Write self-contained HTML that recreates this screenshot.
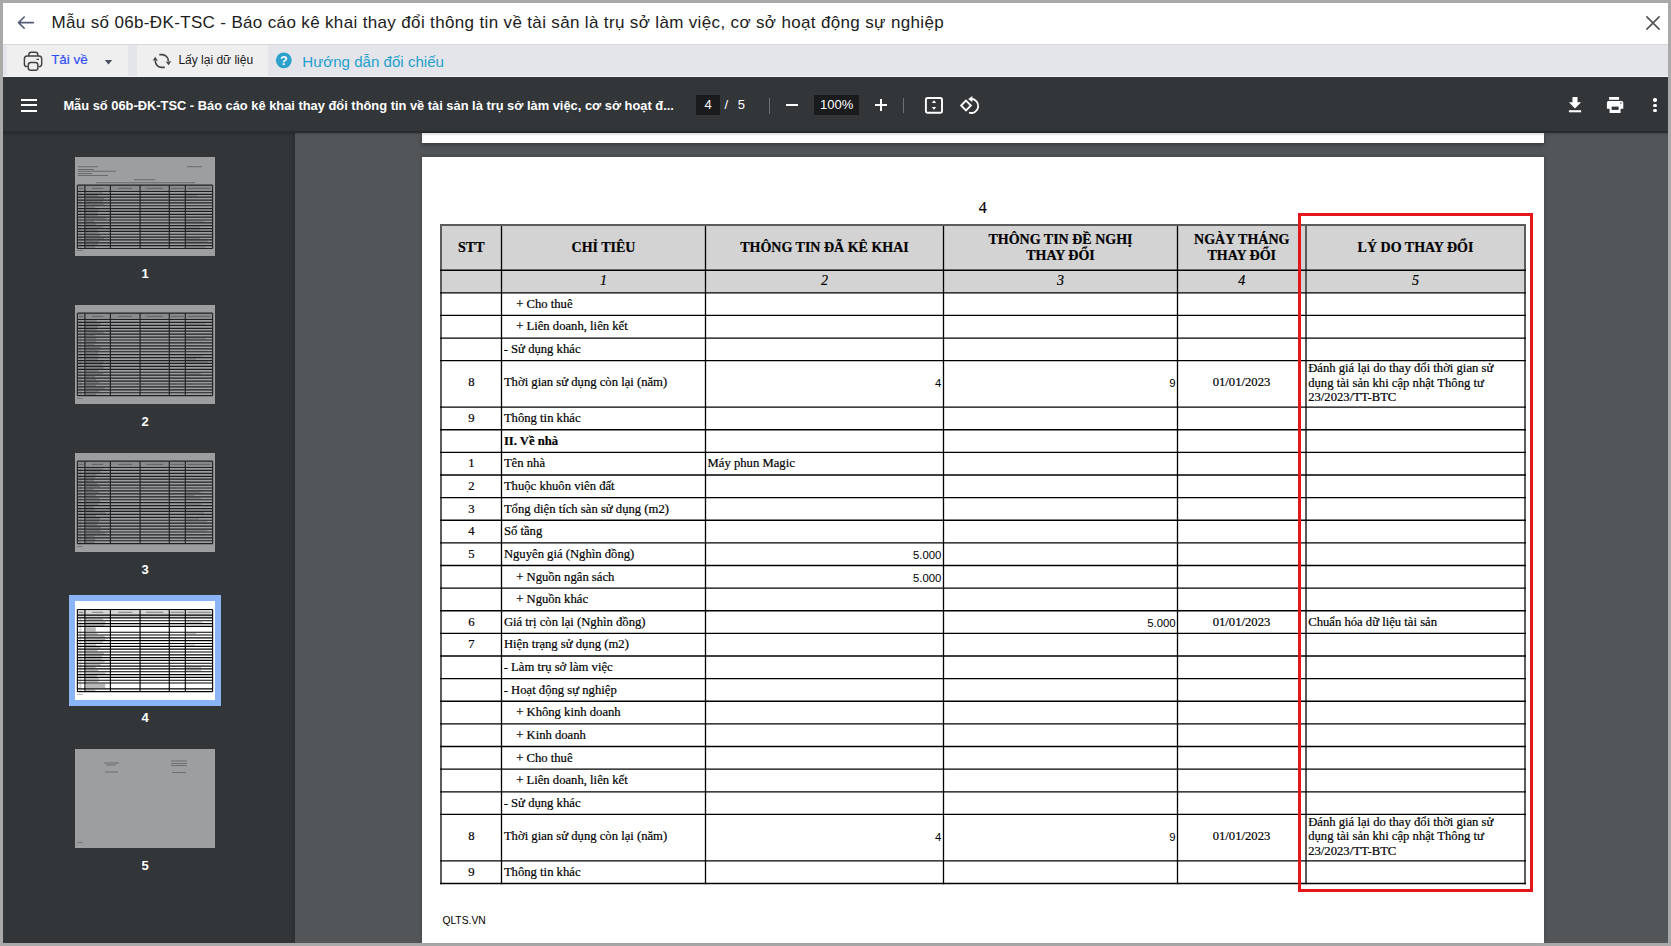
<!DOCTYPE html><html><head><meta charset="utf-8"><title>Mẫu số 06b-ĐK-TSC</title><style>html,body{margin:0;padding:0;width:1671px;height:946px;overflow:hidden;position:relative;}body{font-family:"Liberation Sans",sans-serif;-webkit-font-smoothing:antialiased}</style></head><body><div style="position:absolute;left:0;top:0;width:1671px;height:946px;background:#a9a9a9"></div>
<div style="position:absolute;left:3px;top:3px;width:1665px;height:41px;background:#ffffff"></div>
<div style="position:absolute;left:3px;top:44px;width:1665px;height:1px;background:#d9d9d9"></div>
<div style="position:absolute;left:3px;top:45px;width:1665px;height:31px;background:#e3e5ea"></div>
<div style="position:absolute;left:7px;top:45px;width:121px;height:31px;background:#efefef"></div>
<div style="position:absolute;left:137px;top:45px;width:131px;height:31px;background:#efefef"></div>
<div style="position:absolute;left:3px;top:76px;width:1665px;height:1px;background:#f4f4f4"></div>
<svg style="position:absolute;left:16px;top:14px" width="20" height="18" viewBox="0 0 20 18"><path d="M2.5 8.6 H17.5 M8.2 3 L2.5 8.6 L8.2 14.2" fill="none" stroke="#535b78" stroke-width="1.6" stroke-linecap="round" stroke-linejoin="round"/></svg>
<div style="position:absolute;left:51.50px;top:12.08px;font-family:'Liberation Sans', sans-serif;font-size:17px;line-height:21.25px;font-weight:400;color:#202020;white-space:nowrap;letter-spacing:0.35px;">Mẫu số 06b-ĐK-TSC - Báo cáo kê khai thay đổi thông tin về tài sản là trụ sở làm việc, cơ sở hoạt động sự nghiệp</div>
<svg style="position:absolute;left:1644px;top:14px" width="18" height="18" viewBox="0 0 18 18"><path d="M2.9 2.9 L15.1 15.1 M15.1 2.9 L2.9 15.1" fill="none" stroke="#555" stroke-width="1.7" stroke-linecap="round"/></svg>
<svg style="position:absolute;left:22px;top:50px" width="22" height="23" viewBox="0 0 22 23"><path d="M6.8 6 V4.6 Q6.8 2.3 9.2 2.3 H13.4 Q15.8 2.3 15.8 4.6 V6" fill="none" stroke="#424242" stroke-width="1.45"/><path d="M5.8 16.6 H5 Q2.4 16.6 2.4 13.9 V8.8 Q2.4 6 5.2 6 H16.9 Q19.7 6 19.7 8.8 V13.9 Q19.7 16.6 17 16.6 H16.4" fill="none" stroke="#424242" stroke-width="1.45"/><rect x="6.3" y="12.4" width="9.6" height="7.9" rx="2.6" fill="none" stroke="#424242" stroke-width="1.45"/><path d="M14.4 9.4 H17" stroke="#424242" stroke-width="1.2"/></svg>
<div style="position:absolute;left:51.20px;top:52.38px;font-family:'Liberation Sans', sans-serif;font-size:13.4px;line-height:16.75px;font-weight:400;color:#334ff6;white-space:nowrap;-webkit-text-stroke:0.2px #334ff6;">Tải về</div>
<svg style="position:absolute;left:104px;top:58.5px" width="9" height="7" viewBox="0 0 9 7"><path d="M0.8 1 H8.2 L4.5 5.6 Z" fill="#4b5162"/></svg>
<svg style="position:absolute;left:150px;top:50px" width="24" height="22" viewBox="0 0 24 22"><path d="M9.3 4.6 H12 A6.4 6.4 0 0 1 18.4 11" fill="none" stroke="#444" stroke-width="1.6"/><path d="M15.8 11.8 L18.6 15.3 L21.2 11.2 Z" fill="#444"/><path d="M14.8 17.4 H12 A6.4 6.4 0 0 1 5.3 11" fill="none" stroke="#444" stroke-width="1.6"/><path d="M2.8 10.6 L5.2 6.8 L7.8 10.8 Z" fill="#444"/></svg>
<div style="position:absolute;left:178.40px;top:53.34px;font-family:'Liberation Sans', sans-serif;font-size:12px;line-height:15.0px;font-weight:400;color:#1a1a1a;white-space:nowrap;">Lấy lại dữ liệu</div>
<svg style="position:absolute;left:275px;top:52px" width="18" height="17" viewBox="0 0 18 17"><circle cx="8.8" cy="8.3" r="7.9" fill="#2ba1cb"/><text x="8.8" y="12.9" text-anchor="middle" font-family="Liberation Sans" font-weight="700" font-size="12.5" fill="#fff">?</text></svg>
<div style="position:absolute;left:302.30px;top:52.63px;font-family:'Liberation Sans', sans-serif;font-size:15.1px;line-height:18.88px;font-weight:400;color:#23a0cb;white-space:nowrap;">Hướng dẫn đối chiếu</div>
<div style="position:absolute;left:3px;top:77px;width:1665px;height:56px;background:#323639"></div>
<div style="position:absolute;left:21px;top:99px;width:16px;height:2px;background:#fff"></div>
<div style="position:absolute;left:21px;top:104px;width:16px;height:2px;background:#fff"></div>
<div style="position:absolute;left:21px;top:109.5px;width:16px;height:2px;background:#fff"></div>
<div style="position:absolute;left:63.40px;top:97.59px;font-family:'Liberation Sans', sans-serif;font-size:12.87px;line-height:16.09px;font-weight:700;color:#ffffff;white-space:nowrap;">Mẫu số 06b-ĐK-TSC - Báo cáo kê khai thay đổi thông tin về tài sản là trụ sở làm việc, cơ sở hoạt đ...</div>
<div style="position:absolute;left:696px;top:95px;width:24px;height:20px;background:#191b1c"></div>
<div style="position:absolute;left:408.00px;top:97.37px;width:600px;text-align:center;font-family:'Liberation Sans', sans-serif;font-size:13px;line-height:16.25px;font-weight:400;color:#fff;white-space:nowrap;">4</div>
<div style="position:absolute;left:426.30px;top:97.37px;width:600px;text-align:center;font-family:'Liberation Sans', sans-serif;font-size:13px;line-height:16.25px;font-weight:400;color:#fff;white-space:nowrap;">/</div>
<div style="position:absolute;left:441.40px;top:97.37px;width:600px;text-align:center;font-family:'Liberation Sans', sans-serif;font-size:13px;line-height:16.25px;font-weight:400;color:#fff;white-space:nowrap;">5</div>
<div style="position:absolute;left:769px;top:97.5px;width:1px;height:16px;background:#6d7073"></div>
<div style="position:absolute;left:786px;top:104px;width:12px;height:2px;background:#fff"></div>
<div style="position:absolute;left:814px;top:95px;width:45px;height:20px;background:#191b1c"></div>
<div style="position:absolute;left:536.70px;top:97.37px;width:600px;text-align:center;font-family:'Liberation Sans', sans-serif;font-size:13px;line-height:16.25px;font-weight:400;color:#fff;white-space:nowrap;">100%</div>
<div style="position:absolute;left:875px;top:104px;width:12px;height:2px;background:#fff"></div>
<div style="position:absolute;left:880px;top:99px;width:2px;height:12px;background:#fff"></div>
<div style="position:absolute;left:903px;top:98px;width:1px;height:15px;background:#6d7073"></div>
<svg style="position:absolute;left:922px;top:95px" width="24" height="20" viewBox="0 0 24 20"><rect x="3.9" y="3" width="16.1" height="14.7" rx="1.8" fill="none" stroke="#fff" stroke-width="1.9"/><path d="M9.8 8 L12 5.2 L14.2 8 Z M9.8 12 L12 14.8 L14.2 12 Z" fill="#fff"/></svg>
<svg style="position:absolute;left:958px;top:94px" width="24" height="22" viewBox="0 0 24 22"><path d="M8 6.6 L12.9 11.5 L8 16.4 L3.1 11.5 Z" fill="none" stroke="#fff" stroke-width="1.8"/><path d="M12.6 5 A7 7 0 1 1 11 18.6" fill="none" stroke="#fff" stroke-width="1.8"/><path d="M14.4 2 L14.4 8.2 L10.2 5.1 Z" fill="#fff"/></svg>
<svg style="position:absolute;left:1566px;top:95px" width="18" height="20" viewBox="0 0 18 20"><path d="M6.5 2 H11.5 V7.3 H15.1 L9 13.4 L2.9 7.3 H6.5 Z" fill="#fff"/><rect x="2.9" y="15.2" width="12.2" height="2.1" fill="#fff"/></svg>
<svg style="position:absolute;left:1604px;top:95px" width="22" height="20" viewBox="0 0 22 20"><rect x="5.1" y="2" width="10" height="2.8" fill="#fff"/><path d="M4.6 6 H17.6 Q19.3 6 19.3 7.7 V13.7 H16.6 V17.9 H5.6 V13.7 H2.9 V7.7 Q2.9 6 4.6 6 Z" fill="#fff"/><rect x="7.6" y="11.6" width="7" height="3.3" fill="#323639"/><circle cx="16.9" cy="8" r="0.7" fill="#323639"/></svg>
<div style="position:absolute;left:1653.4px;top:98.4px;width:3.3px;height:3.3px;border-radius:50%;background:#fff"></div>
<div style="position:absolute;left:1653.4px;top:103.7px;width:3.3px;height:3.3px;border-radius:50%;background:#fff"></div>
<div style="position:absolute;left:1653.4px;top:108.7px;width:3.3px;height:3.3px;border-radius:50%;background:#fff"></div>
<div style="position:absolute;left:3px;top:133px;width:292px;height:810px;background:#323639"></div>
<div style="position:absolute;left:290px;top:133px;width:5px;height:810px;background:linear-gradient(to right, rgba(0,0,0,0), rgba(0,0,0,0.12))"></div>
<div style="position:absolute;left:295px;top:133px;width:1373px;height:810px;background:#525659"></div>
<div style="position:absolute;left:422px;top:133px;width:1122px;height:10px;background:#fff;box-shadow:0 2px 5px rgba(0,0,0,0.35)"></div>
<div style="position:absolute;left:422px;top:157px;width:1122px;height:786px;background:#fff;box-shadow:0 -1px 4px rgba(0,0,0,0.2)"></div>
<div style="position:absolute;left:3px;top:131px;width:1665px;height:5px;background:linear-gradient(to bottom, rgba(0,0,0,0.25), rgba(0,0,0,0))"></div>
<div style="position:absolute;left:441px;top:225px;width:1084px;height:67.8px;background:#d3d3d3"></div>
<svg style="position:absolute;left:0;top:0" width="1671" height="946" viewBox="0 0 1671 946"><line x1="441" y1="224" x2="441" y2="884.16" stroke="#5c5c5c" stroke-width="2"/><line x1="501.5" y1="224" x2="501.5" y2="884.16" stroke="#000" stroke-width="1.3"/><line x1="705.5" y1="224" x2="705.5" y2="884.16" stroke="#000" stroke-width="1.3"/><line x1="943.5" y1="224" x2="943.5" y2="884.16" stroke="#000" stroke-width="1.3"/><line x1="1177.5" y1="224" x2="1177.5" y2="884.16" stroke="#000" stroke-width="1.3"/><line x1="1306" y1="224" x2="1306" y2="884.16" stroke="#5c5c5c" stroke-width="2"/><line x1="1525" y1="224" x2="1525" y2="884.16" stroke="#5c5c5c" stroke-width="2"/><line x1="440" y1="225.00" x2="1526" y2="225.00" stroke="#5c5c5c" stroke-width="2"/><line x1="440" y1="270.25" x2="1526" y2="270.25" stroke="#000" stroke-width="1.35"/><line x1="440" y1="292.80" x2="1526" y2="292.80" stroke="#000" stroke-width="1.35"/><line x1="440" y1="315.43" x2="1526" y2="315.43" stroke="#000" stroke-width="1.35"/><line x1="440" y1="338.06" x2="1526" y2="338.06" stroke="#000" stroke-width="1.35"/><line x1="440" y1="360.69" x2="1526" y2="360.69" stroke="#000" stroke-width="1.35"/><line x1="440" y1="407.09" x2="1526" y2="407.09" stroke="#000" stroke-width="1.35"/><line x1="440" y1="429.72" x2="1526" y2="429.72" stroke="#000" stroke-width="1.35"/><line x1="440" y1="452.35" x2="1526" y2="452.35" stroke="#000" stroke-width="1.35"/><line x1="440" y1="474.98" x2="1526" y2="474.98" stroke="#000" stroke-width="1.35"/><line x1="440" y1="497.61" x2="1526" y2="497.61" stroke="#000" stroke-width="1.35"/><line x1="440" y1="520.24" x2="1526" y2="520.24" stroke="#000" stroke-width="1.35"/><line x1="440" y1="542.87" x2="1526" y2="542.87" stroke="#000" stroke-width="1.35"/><line x1="440" y1="565.50" x2="1526" y2="565.50" stroke="#000" stroke-width="1.35"/><line x1="440" y1="588.13" x2="1526" y2="588.13" stroke="#000" stroke-width="1.35"/><line x1="440" y1="610.76" x2="1526" y2="610.76" stroke="#000" stroke-width="1.35"/><line x1="440" y1="633.39" x2="1526" y2="633.39" stroke="#000" stroke-width="1.35"/><line x1="440" y1="656.02" x2="1526" y2="656.02" stroke="#000" stroke-width="1.35"/><line x1="440" y1="678.65" x2="1526" y2="678.65" stroke="#000" stroke-width="1.35"/><line x1="440" y1="701.28" x2="1526" y2="701.28" stroke="#000" stroke-width="1.35"/><line x1="440" y1="723.91" x2="1526" y2="723.91" stroke="#000" stroke-width="1.35"/><line x1="440" y1="746.54" x2="1526" y2="746.54" stroke="#000" stroke-width="1.35"/><line x1="440" y1="769.17" x2="1526" y2="769.17" stroke="#000" stroke-width="1.35"/><line x1="440" y1="791.80" x2="1526" y2="791.80" stroke="#000" stroke-width="1.35"/><line x1="440" y1="814.43" x2="1526" y2="814.43" stroke="#000" stroke-width="1.35"/><line x1="440" y1="860.83" x2="1526" y2="860.83" stroke="#000" stroke-width="1.35"/><line x1="440" y1="883.46" x2="1526" y2="883.46" stroke="#000" stroke-width="1.35"/></svg>
<div style="position:absolute;left:682.70px;top:198.40px;width:600px;text-align:center;font-family:'Liberation Serif', serif;font-size:16px;line-height:20.0px;font-weight:400;color:#000;white-space:nowrap;-webkit-text-stroke:0.2px #000;">4</div>
<div style="position:absolute;left:171.25px;top:238.73px;width:600px;text-align:center;font-family:'Liberation Serif', serif;font-size:14px;line-height:17.5px;font-weight:700;color:#000;white-space:nowrap;-webkit-text-stroke:0.2px #000;">STT</div>
<div style="position:absolute;left:303.50px;top:238.73px;width:600px;text-align:center;font-family:'Liberation Serif', serif;font-size:14px;line-height:17.5px;font-weight:700;color:#000;white-space:nowrap;-webkit-text-stroke:0.2px #000;">CHỈ TIÊU</div>
<div style="position:absolute;left:524.50px;top:238.73px;width:600px;text-align:center;font-family:'Liberation Serif', serif;font-size:14px;line-height:17.5px;font-weight:700;color:#000;white-space:nowrap;-webkit-text-stroke:0.2px #000;">THÔNG TIN ĐÃ KÊ KHAI</div>
<div style="position:absolute;left:760.50px;top:231.13px;width:600px;text-align:center;font-family:'Liberation Serif', serif;font-size:14px;line-height:17.5px;font-weight:700;color:#000;white-space:nowrap;-webkit-text-stroke:0.2px #000;">THÔNG TIN ĐỀ NGHỊ</div>
<div style="position:absolute;left:760.50px;top:246.93px;width:600px;text-align:center;font-family:'Liberation Serif', serif;font-size:14px;line-height:17.5px;font-weight:700;color:#000;white-space:nowrap;-webkit-text-stroke:0.2px #000;">THAY ĐỔI</div>
<div style="position:absolute;left:941.75px;top:230.83px;width:600px;text-align:center;font-family:'Liberation Serif', serif;font-size:14px;line-height:17.5px;font-weight:700;color:#000;white-space:nowrap;-webkit-text-stroke:0.2px #000;">NGÀY THÁNG</div>
<div style="position:absolute;left:941.75px;top:246.63px;width:600px;text-align:center;font-family:'Liberation Serif', serif;font-size:14px;line-height:17.5px;font-weight:700;color:#000;white-space:nowrap;-webkit-text-stroke:0.2px #000;">THAY ĐỔI</div>
<div style="position:absolute;left:1115.50px;top:238.93px;width:600px;text-align:center;font-family:'Liberation Serif', serif;font-size:14px;line-height:17.5px;font-weight:700;color:#000;white-space:nowrap;-webkit-text-stroke:0.2px #000;">LÝ DO THAY ĐỔI</div>
<div style="position:absolute;left:303.50px;top:271.93px;width:600px;text-align:center;font-family:'Liberation Serif', serif;font-size:14px;line-height:17.5px;font-weight:400;color:#000;white-space:nowrap;font-style:italic;-webkit-text-stroke:0.2px #000;">1</div>
<div style="position:absolute;left:524.50px;top:271.93px;width:600px;text-align:center;font-family:'Liberation Serif', serif;font-size:14px;line-height:17.5px;font-weight:400;color:#000;white-space:nowrap;font-style:italic;-webkit-text-stroke:0.2px #000;">2</div>
<div style="position:absolute;left:760.50px;top:271.93px;width:600px;text-align:center;font-family:'Liberation Serif', serif;font-size:14px;line-height:17.5px;font-weight:400;color:#000;white-space:nowrap;font-style:italic;-webkit-text-stroke:0.2px #000;">3</div>
<div style="position:absolute;left:941.75px;top:271.93px;width:600px;text-align:center;font-family:'Liberation Serif', serif;font-size:14px;line-height:17.5px;font-weight:400;color:#000;white-space:nowrap;font-style:italic;-webkit-text-stroke:0.2px #000;">4</div>
<div style="position:absolute;left:1115.50px;top:271.93px;width:600px;text-align:center;font-family:'Liberation Serif', serif;font-size:14px;line-height:17.5px;font-weight:400;color:#000;white-space:nowrap;font-style:italic;-webkit-text-stroke:0.2px #000;">5</div>
<div style="position:absolute;left:516.20px;top:296.82px;font-family:'Liberation Serif', serif;font-size:12.67px;line-height:15.84px;font-weight:400;color:#000;white-space:nowrap;-webkit-text-stroke:0.2px #000;">+ Cho thuê</div>
<div style="position:absolute;left:516.20px;top:319.45px;font-family:'Liberation Serif', serif;font-size:12.67px;line-height:15.84px;font-weight:400;color:#000;white-space:nowrap;-webkit-text-stroke:0.2px #000;">+ Liên doanh, liên kết</div>
<div style="position:absolute;left:503.70px;top:342.08px;font-family:'Liberation Serif', serif;font-size:12.67px;line-height:15.84px;font-weight:400;color:#000;white-space:nowrap;-webkit-text-stroke:0.2px #000;">- Sử dụng khác</div>
<div style="position:absolute;left:171.30px;top:375.00px;width:600px;text-align:center;font-family:'Liberation Serif', serif;font-size:12.67px;line-height:15.84px;font-weight:400;color:#000;white-space:nowrap;-webkit-text-stroke:0.2px #000;">8</div>
<div style="position:absolute;left:503.90px;top:375.00px;font-family:'Liberation Serif', serif;font-size:12.67px;line-height:15.84px;font-weight:400;color:#000;white-space:nowrap;-webkit-text-stroke:0.2px #000;">Thời gian sử dụng còn lại (năm)</div>
<div style="position:absolute;left:341.30px;top:376.18px;width:600px;text-align:right;font-family:'Liberation Sans', sans-serif;font-size:11.33px;line-height:14.16px;font-weight:400;color:#000;white-space:nowrap;">4</div>
<div style="position:absolute;left:575.60px;top:376.18px;width:600px;text-align:right;font-family:'Liberation Sans', sans-serif;font-size:11.33px;line-height:14.16px;font-weight:400;color:#000;white-space:nowrap;">9</div>
<div style="position:absolute;left:941.50px;top:375.00px;width:600px;text-align:center;font-family:'Liberation Serif', serif;font-size:12.67px;line-height:15.84px;font-weight:400;color:#000;white-space:nowrap;-webkit-text-stroke:0.2px #000;">01/01/2023</div>
<div style="position:absolute;left:1308.20px;top:361.30px;font-family:'Liberation Serif', serif;font-size:12.67px;line-height:15.84px;font-weight:400;color:#000;white-space:nowrap;-webkit-text-stroke:0.2px #000;">Đánh giá lại do thay đổi thời gian sử</div>
<div style="position:absolute;left:1308.20px;top:375.60px;font-family:'Liberation Serif', serif;font-size:12.67px;line-height:15.84px;font-weight:400;color:#000;white-space:nowrap;-webkit-text-stroke:0.2px #000;">dụng tài sản khi cập nhật Thông tư</div>
<div style="position:absolute;left:1308.20px;top:389.90px;font-family:'Liberation Serif', serif;font-size:12.67px;line-height:15.84px;font-weight:400;color:#000;white-space:nowrap;-webkit-text-stroke:0.2px #000;">23/2023/TT-BTC</div>
<div style="position:absolute;left:171.30px;top:411.11px;width:600px;text-align:center;font-family:'Liberation Serif', serif;font-size:12.67px;line-height:15.84px;font-weight:400;color:#000;white-space:nowrap;-webkit-text-stroke:0.2px #000;">9</div>
<div style="position:absolute;left:503.90px;top:411.11px;font-family:'Liberation Serif', serif;font-size:12.67px;line-height:15.84px;font-weight:400;color:#000;white-space:nowrap;-webkit-text-stroke:0.2px #000;">Thông tin khác</div>
<div style="position:absolute;left:503.90px;top:433.74px;font-family:'Liberation Serif', serif;font-size:12.67px;line-height:15.84px;font-weight:700;color:#000;white-space:nowrap;-webkit-text-stroke:0.2px #000;">II. Về nhà</div>
<div style="position:absolute;left:171.30px;top:456.37px;width:600px;text-align:center;font-family:'Liberation Serif', serif;font-size:12.67px;line-height:15.84px;font-weight:400;color:#000;white-space:nowrap;-webkit-text-stroke:0.2px #000;">1</div>
<div style="position:absolute;left:503.90px;top:456.37px;font-family:'Liberation Serif', serif;font-size:12.67px;line-height:15.84px;font-weight:400;color:#000;white-space:nowrap;-webkit-text-stroke:0.2px #000;">Tên nhà</div>
<div style="position:absolute;left:707.60px;top:456.37px;font-family:'Liberation Serif', serif;font-size:12.67px;line-height:15.84px;font-weight:400;color:#000;white-space:nowrap;-webkit-text-stroke:0.2px #000;">Máy phun Magic</div>
<div style="position:absolute;left:171.30px;top:479.00px;width:600px;text-align:center;font-family:'Liberation Serif', serif;font-size:12.67px;line-height:15.84px;font-weight:400;color:#000;white-space:nowrap;-webkit-text-stroke:0.2px #000;">2</div>
<div style="position:absolute;left:503.90px;top:479.00px;font-family:'Liberation Serif', serif;font-size:12.67px;line-height:15.84px;font-weight:400;color:#000;white-space:nowrap;-webkit-text-stroke:0.2px #000;">Thuộc khuôn viên đất</div>
<div style="position:absolute;left:171.30px;top:501.63px;width:600px;text-align:center;font-family:'Liberation Serif', serif;font-size:12.67px;line-height:15.84px;font-weight:400;color:#000;white-space:nowrap;-webkit-text-stroke:0.2px #000;">3</div>
<div style="position:absolute;left:503.90px;top:501.63px;font-family:'Liberation Serif', serif;font-size:12.67px;line-height:15.84px;font-weight:400;color:#000;white-space:nowrap;-webkit-text-stroke:0.2px #000;">Tổng diện tích sàn sử dụng (m2)</div>
<div style="position:absolute;left:171.30px;top:524.26px;width:600px;text-align:center;font-family:'Liberation Serif', serif;font-size:12.67px;line-height:15.84px;font-weight:400;color:#000;white-space:nowrap;-webkit-text-stroke:0.2px #000;">4</div>
<div style="position:absolute;left:503.90px;top:524.26px;font-family:'Liberation Serif', serif;font-size:12.67px;line-height:15.84px;font-weight:400;color:#000;white-space:nowrap;-webkit-text-stroke:0.2px #000;">Số tầng</div>
<div style="position:absolute;left:171.30px;top:546.89px;width:600px;text-align:center;font-family:'Liberation Serif', serif;font-size:12.67px;line-height:15.84px;font-weight:400;color:#000;white-space:nowrap;-webkit-text-stroke:0.2px #000;">5</div>
<div style="position:absolute;left:503.90px;top:546.89px;font-family:'Liberation Serif', serif;font-size:12.67px;line-height:15.84px;font-weight:400;color:#000;white-space:nowrap;-webkit-text-stroke:0.2px #000;">Nguyên giá (Nghìn đồng)</div>
<div style="position:absolute;left:341.30px;top:548.08px;width:600px;text-align:right;font-family:'Liberation Sans', sans-serif;font-size:11.33px;line-height:14.16px;font-weight:400;color:#000;white-space:nowrap;">5.000</div>
<div style="position:absolute;left:516.20px;top:569.52px;font-family:'Liberation Serif', serif;font-size:12.67px;line-height:15.84px;font-weight:400;color:#000;white-space:nowrap;-webkit-text-stroke:0.2px #000;">+ Nguồn ngân sách</div>
<div style="position:absolute;left:341.30px;top:570.71px;width:600px;text-align:right;font-family:'Liberation Sans', sans-serif;font-size:11.33px;line-height:14.16px;font-weight:400;color:#000;white-space:nowrap;">5.000</div>
<div style="position:absolute;left:516.20px;top:592.15px;font-family:'Liberation Serif', serif;font-size:12.67px;line-height:15.84px;font-weight:400;color:#000;white-space:nowrap;-webkit-text-stroke:0.2px #000;">+ Nguồn khác</div>
<div style="position:absolute;left:171.30px;top:614.78px;width:600px;text-align:center;font-family:'Liberation Serif', serif;font-size:12.67px;line-height:15.84px;font-weight:400;color:#000;white-space:nowrap;-webkit-text-stroke:0.2px #000;">6</div>
<div style="position:absolute;left:503.90px;top:614.78px;font-family:'Liberation Serif', serif;font-size:12.67px;line-height:15.84px;font-weight:400;color:#000;white-space:nowrap;-webkit-text-stroke:0.2px #000;">Giá trị còn lại (Nghìn đồng)</div>
<div style="position:absolute;left:575.60px;top:615.97px;width:600px;text-align:right;font-family:'Liberation Sans', sans-serif;font-size:11.33px;line-height:14.16px;font-weight:400;color:#000;white-space:nowrap;">5.000</div>
<div style="position:absolute;left:941.50px;top:614.78px;width:600px;text-align:center;font-family:'Liberation Serif', serif;font-size:12.67px;line-height:15.84px;font-weight:400;color:#000;white-space:nowrap;-webkit-text-stroke:0.2px #000;">01/01/2023</div>
<div style="position:absolute;left:1308.20px;top:614.78px;font-family:'Liberation Serif', serif;font-size:12.67px;line-height:15.84px;font-weight:400;color:#000;white-space:nowrap;-webkit-text-stroke:0.2px #000;">Chuẩn hóa dữ liệu tài sản</div>
<div style="position:absolute;left:171.30px;top:637.41px;width:600px;text-align:center;font-family:'Liberation Serif', serif;font-size:12.67px;line-height:15.84px;font-weight:400;color:#000;white-space:nowrap;-webkit-text-stroke:0.2px #000;">7</div>
<div style="position:absolute;left:503.90px;top:637.41px;font-family:'Liberation Serif', serif;font-size:12.67px;line-height:15.84px;font-weight:400;color:#000;white-space:nowrap;-webkit-text-stroke:0.2px #000;">Hiện trạng sử dụng (m2)</div>
<div style="position:absolute;left:503.70px;top:660.04px;font-family:'Liberation Serif', serif;font-size:12.67px;line-height:15.84px;font-weight:400;color:#000;white-space:nowrap;-webkit-text-stroke:0.2px #000;">- Làm trụ sở làm việc</div>
<div style="position:absolute;left:503.70px;top:682.67px;font-family:'Liberation Serif', serif;font-size:12.67px;line-height:15.84px;font-weight:400;color:#000;white-space:nowrap;-webkit-text-stroke:0.2px #000;">- Hoạt động sự nghiệp</div>
<div style="position:absolute;left:516.20px;top:705.30px;font-family:'Liberation Serif', serif;font-size:12.67px;line-height:15.84px;font-weight:400;color:#000;white-space:nowrap;-webkit-text-stroke:0.2px #000;">+ Không kinh doanh</div>
<div style="position:absolute;left:516.20px;top:727.93px;font-family:'Liberation Serif', serif;font-size:12.67px;line-height:15.84px;font-weight:400;color:#000;white-space:nowrap;-webkit-text-stroke:0.2px #000;">+ Kinh doanh</div>
<div style="position:absolute;left:516.20px;top:750.56px;font-family:'Liberation Serif', serif;font-size:12.67px;line-height:15.84px;font-weight:400;color:#000;white-space:nowrap;-webkit-text-stroke:0.2px #000;">+ Cho thuê</div>
<div style="position:absolute;left:516.20px;top:773.19px;font-family:'Liberation Serif', serif;font-size:12.67px;line-height:15.84px;font-weight:400;color:#000;white-space:nowrap;-webkit-text-stroke:0.2px #000;">+ Liên doanh, liên kết</div>
<div style="position:absolute;left:503.70px;top:795.82px;font-family:'Liberation Serif', serif;font-size:12.67px;line-height:15.84px;font-weight:400;color:#000;white-space:nowrap;-webkit-text-stroke:0.2px #000;">- Sử dụng khác</div>
<div style="position:absolute;left:171.30px;top:828.74px;width:600px;text-align:center;font-family:'Liberation Serif', serif;font-size:12.67px;line-height:15.84px;font-weight:400;color:#000;white-space:nowrap;-webkit-text-stroke:0.2px #000;">8</div>
<div style="position:absolute;left:503.90px;top:828.74px;font-family:'Liberation Serif', serif;font-size:12.67px;line-height:15.84px;font-weight:400;color:#000;white-space:nowrap;-webkit-text-stroke:0.2px #000;">Thời gian sử dụng còn lại (năm)</div>
<div style="position:absolute;left:341.30px;top:829.92px;width:600px;text-align:right;font-family:'Liberation Sans', sans-serif;font-size:11.33px;line-height:14.16px;font-weight:400;color:#000;white-space:nowrap;">4</div>
<div style="position:absolute;left:575.60px;top:829.92px;width:600px;text-align:right;font-family:'Liberation Sans', sans-serif;font-size:11.33px;line-height:14.16px;font-weight:400;color:#000;white-space:nowrap;">9</div>
<div style="position:absolute;left:941.50px;top:828.74px;width:600px;text-align:center;font-family:'Liberation Serif', serif;font-size:12.67px;line-height:15.84px;font-weight:400;color:#000;white-space:nowrap;-webkit-text-stroke:0.2px #000;">01/01/2023</div>
<div style="position:absolute;left:1308.20px;top:815.04px;font-family:'Liberation Serif', serif;font-size:12.67px;line-height:15.84px;font-weight:400;color:#000;white-space:nowrap;-webkit-text-stroke:0.2px #000;">Đánh giá lại do thay đổi thời gian sử</div>
<div style="position:absolute;left:1308.20px;top:829.34px;font-family:'Liberation Serif', serif;font-size:12.67px;line-height:15.84px;font-weight:400;color:#000;white-space:nowrap;-webkit-text-stroke:0.2px #000;">dụng tài sản khi cập nhật Thông tư</div>
<div style="position:absolute;left:1308.20px;top:843.64px;font-family:'Liberation Serif', serif;font-size:12.67px;line-height:15.84px;font-weight:400;color:#000;white-space:nowrap;-webkit-text-stroke:0.2px #000;">23/2023/TT-BTC</div>
<div style="position:absolute;left:171.30px;top:864.85px;width:600px;text-align:center;font-family:'Liberation Serif', serif;font-size:12.67px;line-height:15.84px;font-weight:400;color:#000;white-space:nowrap;-webkit-text-stroke:0.2px #000;">9</div>
<div style="position:absolute;left:503.90px;top:864.85px;font-family:'Liberation Serif', serif;font-size:12.67px;line-height:15.84px;font-weight:400;color:#000;white-space:nowrap;-webkit-text-stroke:0.2px #000;">Thông tin khác</div>
<div style="position:absolute;left:442.40px;top:915.39px;font-family:'Liberation Sans', sans-serif;font-size:10.3px;line-height:12.88px;font-weight:400;color:#000;white-space:nowrap;">QLTS.VN</div>
<div style="position:absolute;left:1298px;top:213px;width:229px;height:673px;border:3px solid #e3161c"></div>
<svg style="position:absolute;left:75px;top:157px" width="140" height="99" viewBox="0 0 140 99"><rect width="140" height="99" fill="#9d9e9f"/><rect x="2.37" y="28.20" width="135.26" height="6.30" fill="#8a8b8c"/><rect x="3.87" y="30.85" width="4.55" height="1.1" fill="#1d1f20" opacity="0.35"/><rect x="17.15" y="30.85" width="11.00" height="1.1" fill="#1d1f20" opacity="0.35"/><rect x="43.22" y="30.85" width="14.00" height="1.1" fill="#1d1f20" opacity="0.35"/><rect x="71.17" y="30.85" width="17.00" height="1.1" fill="#1d1f20" opacity="0.35"/><rect x="95.77" y="30.85" width="13.03" height="1.1" fill="#1d1f20" opacity="0.35"/><rect x="112.47" y="30.85" width="23.00" height="1.1" fill="#1d1f20" opacity="0.35"/><rect x="10.72" y="35.30" width="16.95" height="1.35" fill="#1d1f20" opacity="0.28"/><rect x="4.37" y="35.30" width="2" height="1.35" fill="#1d1f20" opacity="0.2"/><rect x="10.72" y="38.15" width="12.56" height="1.35" fill="#1d1f20" opacity="0.28"/><rect x="4.37" y="38.15" width="2" height="1.35" fill="#1d1f20" opacity="0.2"/><rect x="111.10" y="38.15" width="10.66" height="1.35" fill="#1d1f20" opacity="0.22"/><rect x="10.72" y="41.00" width="18.36" height="1.35" fill="#1d1f20" opacity="0.28"/><rect x="4.37" y="41.00" width="2" height="1.35" fill="#1d1f20" opacity="0.2"/><rect x="10.72" y="43.85" width="17.08" height="1.35" fill="#1d1f20" opacity="0.28"/><rect x="4.37" y="43.85" width="2" height="1.35" fill="#1d1f20" opacity="0.2"/><rect x="10.72" y="46.70" width="18.72" height="1.35" fill="#1d1f20" opacity="0.28"/><rect x="4.37" y="46.70" width="2" height="1.35" fill="#1d1f20" opacity="0.2"/><rect x="10.72" y="49.55" width="9.36" height="1.35" fill="#1d1f20" opacity="0.28"/><rect x="4.37" y="49.55" width="2" height="1.35" fill="#1d1f20" opacity="0.2"/><rect x="10.72" y="52.40" width="13.04" height="1.35" fill="#1d1f20" opacity="0.28"/><rect x="4.37" y="52.40" width="2" height="1.35" fill="#1d1f20" opacity="0.2"/><rect x="10.72" y="55.25" width="11.89" height="1.35" fill="#1d1f20" opacity="0.28"/><rect x="4.37" y="55.25" width="2" height="1.35" fill="#1d1f20" opacity="0.2"/><rect x="10.72" y="58.10" width="12.51" height="1.35" fill="#1d1f20" opacity="0.28"/><rect x="4.37" y="58.10" width="2" height="1.35" fill="#1d1f20" opacity="0.2"/><rect x="10.72" y="60.95" width="19.96" height="1.35" fill="#1d1f20" opacity="0.28"/><rect x="4.37" y="60.95" width="2" height="1.35" fill="#1d1f20" opacity="0.2"/><rect x="10.72" y="63.80" width="8.34" height="1.35" fill="#1d1f20" opacity="0.28"/><rect x="4.37" y="63.80" width="2" height="1.35" fill="#1d1f20" opacity="0.2"/><rect x="111.10" y="63.80" width="17.60" height="1.35" fill="#1d1f20" opacity="0.22"/><rect x="10.72" y="66.65" width="9.86" height="1.35" fill="#1d1f20" opacity="0.28"/><rect x="4.37" y="66.65" width="2" height="1.35" fill="#1d1f20" opacity="0.2"/><rect x="10.72" y="69.50" width="17.27" height="1.35" fill="#1d1f20" opacity="0.28"/><rect x="4.37" y="69.50" width="2" height="1.35" fill="#1d1f20" opacity="0.2"/><rect x="111.10" y="69.50" width="13.90" height="1.35" fill="#1d1f20" opacity="0.22"/><rect x="10.72" y="72.35" width="11.38" height="1.35" fill="#1d1f20" opacity="0.28"/><rect x="4.37" y="72.35" width="2" height="1.35" fill="#1d1f20" opacity="0.2"/><rect x="111.10" y="72.35" width="13.70" height="1.35" fill="#1d1f20" opacity="0.22"/><rect x="10.72" y="75.20" width="12.96" height="1.35" fill="#1d1f20" opacity="0.28"/><rect x="4.37" y="75.20" width="2" height="1.35" fill="#1d1f20" opacity="0.2"/><rect x="10.72" y="78.05" width="14.61" height="1.35" fill="#1d1f20" opacity="0.28"/><rect x="4.37" y="78.05" width="2" height="1.35" fill="#1d1f20" opacity="0.2"/><rect x="10.72" y="80.90" width="18.35" height="1.35" fill="#1d1f20" opacity="0.28"/><rect x="4.37" y="80.90" width="2" height="1.35" fill="#1d1f20" opacity="0.2"/><rect x="111.10" y="80.90" width="14.12" height="1.35" fill="#1d1f20" opacity="0.22"/><rect x="10.72" y="83.75" width="13.45" height="1.35" fill="#1d1f20" opacity="0.28"/><rect x="4.37" y="83.75" width="2" height="1.35" fill="#1d1f20" opacity="0.2"/><rect x="111.10" y="83.75" width="21.57" height="1.35" fill="#1d1f20" opacity="0.22"/><rect x="10.72" y="86.60" width="12.31" height="1.35" fill="#1d1f20" opacity="0.28"/><rect x="4.37" y="86.60" width="2" height="1.35" fill="#1d1f20" opacity="0.2"/><rect x="10.72" y="89.45" width="9.41" height="1.35" fill="#1d1f20" opacity="0.28"/><rect x="4.37" y="89.45" width="2" height="1.35" fill="#1d1f20" opacity="0.2"/><rect x="111.10" y="89.45" width="19.17" height="1.35" fill="#1d1f20" opacity="0.22"/><line x1="2.37" y1="28.20" x2="2.37" y2="91.50" stroke="#1d1f20" stroke-width="1.1"/><line x1="9.92" y1="28.20" x2="9.92" y2="91.50" stroke="#1d1f20" stroke-width="1.1"/><line x1="35.37" y1="28.20" x2="35.37" y2="91.50" stroke="#1d1f20" stroke-width="1.1"/><line x1="65.07" y1="28.20" x2="65.07" y2="91.50" stroke="#1d1f20" stroke-width="1.1"/><line x1="94.27" y1="28.20" x2="94.27" y2="91.50" stroke="#1d1f20" stroke-width="1.1"/><line x1="110.30" y1="28.20" x2="110.30" y2="91.50" stroke="#1d1f20" stroke-width="1.1"/><line x1="137.63" y1="28.20" x2="137.63" y2="91.50" stroke="#1d1f20" stroke-width="1.1"/><line x1="2.37" y1="28.20" x2="137.63" y2="28.20" stroke="#1d1f20" stroke-width="1.2"/><line x1="2.37" y1="34.49" x2="137.63" y2="34.49" stroke="#1d1f20" stroke-width="1.2"/><line x1="2.37" y1="34.50" x2="137.63" y2="34.50" stroke="#1d1f20" stroke-width="1.2"/><line x1="2.37" y1="37.35" x2="137.63" y2="37.35" stroke="#1d1f20" stroke-width="1.2"/><line x1="2.37" y1="40.20" x2="137.63" y2="40.20" stroke="#1d1f20" stroke-width="1.2"/><line x1="2.37" y1="43.05" x2="137.63" y2="43.05" stroke="#1d1f20" stroke-width="1.2"/><line x1="2.37" y1="45.90" x2="137.63" y2="45.90" stroke="#1d1f20" stroke-width="1.2"/><line x1="2.37" y1="48.75" x2="137.63" y2="48.75" stroke="#1d1f20" stroke-width="1.2"/><line x1="2.37" y1="51.60" x2="137.63" y2="51.60" stroke="#1d1f20" stroke-width="1.2"/><line x1="2.37" y1="54.45" x2="137.63" y2="54.45" stroke="#1d1f20" stroke-width="1.2"/><line x1="2.37" y1="57.30" x2="137.63" y2="57.30" stroke="#1d1f20" stroke-width="1.2"/><line x1="2.37" y1="60.15" x2="137.63" y2="60.15" stroke="#1d1f20" stroke-width="1.2"/><line x1="2.37" y1="63.00" x2="137.63" y2="63.00" stroke="#1d1f20" stroke-width="1.2"/><line x1="2.37" y1="65.85" x2="137.63" y2="65.85" stroke="#1d1f20" stroke-width="1.2"/><line x1="2.37" y1="68.70" x2="137.63" y2="68.70" stroke="#1d1f20" stroke-width="1.2"/><line x1="2.37" y1="71.55" x2="137.63" y2="71.55" stroke="#1d1f20" stroke-width="1.2"/><line x1="2.37" y1="74.40" x2="137.63" y2="74.40" stroke="#1d1f20" stroke-width="1.2"/><line x1="2.37" y1="77.25" x2="137.63" y2="77.25" stroke="#1d1f20" stroke-width="1.2"/><line x1="2.37" y1="80.10" x2="137.63" y2="80.10" stroke="#1d1f20" stroke-width="1.2"/><line x1="2.37" y1="82.95" x2="137.63" y2="82.95" stroke="#1d1f20" stroke-width="1.2"/><line x1="2.37" y1="85.80" x2="137.63" y2="85.80" stroke="#1d1f20" stroke-width="1.2"/><line x1="2.37" y1="88.65" x2="137.63" y2="88.65" stroke="#1d1f20" stroke-width="1.2"/><line x1="2.37" y1="91.50" x2="137.63" y2="91.50" stroke="#1d1f20" stroke-width="1.2"/><rect x="3" y="9.3" width="20" height="0.9" fill="#1d1f20" opacity="0.45"/><rect x="112" y="9.3" width="15" height="0.9" fill="#1d1f20" opacity="0.45"/><rect x="3" y="12" width="16" height="0.9" fill="#1d1f20" opacity="0.45"/><rect x="3" y="13.8" width="38" height="0.9" fill="#1d1f20" opacity="0.45"/><rect x="3" y="16.2" width="14" height="0.9" fill="#1d1f20" opacity="0.45"/><rect x="3" y="18" width="30" height="0.9" fill="#1d1f20" opacity="0.45"/><rect x="59" y="22.3" width="21" height="0.9" fill="#1d1f20" opacity="0.45"/><rect x="21" y="25.3" width="99" height="0.9" fill="#1d1f20" opacity="0.45"/><rect x="2" y="93" width="6" height="0.8" fill="#1d1f20" opacity="0.35"/></svg>
<div style="position:absolute;left:-155.00px;top:266.37px;width:600px;text-align:center;font-family:'Liberation Sans', sans-serif;font-size:13px;line-height:16.25px;font-weight:700;color:#fff;white-space:nowrap;">1</div>
<svg style="position:absolute;left:75px;top:305px" width="140" height="99" viewBox="0 0 140 99"><rect width="140" height="99" fill="#9d9e9f"/><rect x="2.37" y="8.20" width="135.26" height="6.30" fill="#8a8b8c"/><rect x="3.87" y="10.85" width="4.55" height="1.1" fill="#1d1f20" opacity="0.35"/><rect x="17.15" y="10.85" width="11.00" height="1.1" fill="#1d1f20" opacity="0.35"/><rect x="43.22" y="10.85" width="14.00" height="1.1" fill="#1d1f20" opacity="0.35"/><rect x="71.17" y="10.85" width="17.00" height="1.1" fill="#1d1f20" opacity="0.35"/><rect x="95.77" y="10.85" width="13.03" height="1.1" fill="#1d1f20" opacity="0.35"/><rect x="112.47" y="10.85" width="23.00" height="1.1" fill="#1d1f20" opacity="0.35"/><rect x="10.72" y="15.30" width="11.07" height="1.43" fill="#1d1f20" opacity="0.28"/><rect x="4.37" y="15.30" width="2" height="1.43" fill="#1d1f20" opacity="0.2"/><rect x="10.72" y="18.23" width="14.66" height="1.43" fill="#1d1f20" opacity="0.28"/><rect x="4.37" y="18.23" width="2" height="1.43" fill="#1d1f20" opacity="0.2"/><rect x="111.10" y="18.23" width="19.06" height="1.43" fill="#1d1f20" opacity="0.22"/><rect x="10.72" y="21.16" width="12.14" height="1.43" fill="#1d1f20" opacity="0.28"/><rect x="4.37" y="21.16" width="2" height="1.43" fill="#1d1f20" opacity="0.2"/><rect x="10.72" y="24.09" width="11.23" height="1.43" fill="#1d1f20" opacity="0.28"/><rect x="4.37" y="24.09" width="2" height="1.43" fill="#1d1f20" opacity="0.2"/><rect x="10.72" y="27.02" width="17.94" height="1.43" fill="#1d1f20" opacity="0.28"/><rect x="4.37" y="27.02" width="2" height="1.43" fill="#1d1f20" opacity="0.2"/><rect x="10.72" y="29.95" width="9.54" height="1.43" fill="#1d1f20" opacity="0.28"/><rect x="4.37" y="29.95" width="2" height="1.43" fill="#1d1f20" opacity="0.2"/><rect x="10.72" y="32.88" width="10.75" height="1.43" fill="#1d1f20" opacity="0.28"/><rect x="4.37" y="32.88" width="2" height="1.43" fill="#1d1f20" opacity="0.2"/><rect x="111.10" y="32.88" width="19.04" height="1.43" fill="#1d1f20" opacity="0.22"/><rect x="10.72" y="35.82" width="10.48" height="1.43" fill="#1d1f20" opacity="0.28"/><rect x="4.37" y="35.82" width="2" height="1.43" fill="#1d1f20" opacity="0.2"/><rect x="10.72" y="38.75" width="8.55" height="1.43" fill="#1d1f20" opacity="0.28"/><rect x="4.37" y="38.75" width="2" height="1.43" fill="#1d1f20" opacity="0.2"/><rect x="10.72" y="41.68" width="14.88" height="1.43" fill="#1d1f20" opacity="0.28"/><rect x="4.37" y="41.68" width="2" height="1.43" fill="#1d1f20" opacity="0.2"/><rect x="10.72" y="44.61" width="13.50" height="1.43" fill="#1d1f20" opacity="0.28"/><rect x="4.37" y="44.61" width="2" height="1.43" fill="#1d1f20" opacity="0.2"/><rect x="10.72" y="47.54" width="12.49" height="1.43" fill="#1d1f20" opacity="0.28"/><rect x="4.37" y="47.54" width="2" height="1.43" fill="#1d1f20" opacity="0.2"/><rect x="10.72" y="50.47" width="13.05" height="1.43" fill="#1d1f20" opacity="0.28"/><rect x="4.37" y="50.47" width="2" height="1.43" fill="#1d1f20" opacity="0.2"/><rect x="111.10" y="50.47" width="16.46" height="1.43" fill="#1d1f20" opacity="0.22"/><rect x="10.72" y="53.40" width="12.42" height="1.43" fill="#1d1f20" opacity="0.28"/><rect x="4.37" y="53.40" width="2" height="1.43" fill="#1d1f20" opacity="0.2"/><rect x="111.10" y="53.40" width="9.74" height="1.43" fill="#1d1f20" opacity="0.22"/><rect x="10.72" y="56.33" width="18.01" height="1.43" fill="#1d1f20" opacity="0.28"/><rect x="4.37" y="56.33" width="2" height="1.43" fill="#1d1f20" opacity="0.2"/><rect x="111.10" y="56.33" width="21.57" height="1.43" fill="#1d1f20" opacity="0.22"/><rect x="10.72" y="59.26" width="16.84" height="1.43" fill="#1d1f20" opacity="0.28"/><rect x="4.37" y="59.26" width="2" height="1.43" fill="#1d1f20" opacity="0.2"/><rect x="10.72" y="62.19" width="18.01" height="1.43" fill="#1d1f20" opacity="0.28"/><rect x="4.37" y="62.19" width="2" height="1.43" fill="#1d1f20" opacity="0.2"/><rect x="10.72" y="65.12" width="12.51" height="1.43" fill="#1d1f20" opacity="0.28"/><rect x="4.37" y="65.12" width="2" height="1.43" fill="#1d1f20" opacity="0.2"/><rect x="10.72" y="68.05" width="17.33" height="1.43" fill="#1d1f20" opacity="0.28"/><rect x="4.37" y="68.05" width="2" height="1.43" fill="#1d1f20" opacity="0.2"/><rect x="111.10" y="68.05" width="14.73" height="1.43" fill="#1d1f20" opacity="0.22"/><rect x="10.72" y="70.98" width="9.29" height="1.43" fill="#1d1f20" opacity="0.28"/><rect x="4.37" y="70.98" width="2" height="1.43" fill="#1d1f20" opacity="0.2"/><rect x="10.72" y="73.92" width="10.22" height="1.43" fill="#1d1f20" opacity="0.28"/><rect x="4.37" y="73.92" width="2" height="1.43" fill="#1d1f20" opacity="0.2"/><rect x="10.72" y="76.85" width="13.60" height="1.43" fill="#1d1f20" opacity="0.28"/><rect x="4.37" y="76.85" width="2" height="1.43" fill="#1d1f20" opacity="0.2"/><rect x="10.72" y="79.78" width="10.18" height="1.43" fill="#1d1f20" opacity="0.28"/><rect x="4.37" y="79.78" width="2" height="1.43" fill="#1d1f20" opacity="0.2"/><rect x="10.72" y="82.71" width="19.09" height="1.43" fill="#1d1f20" opacity="0.28"/><rect x="4.37" y="82.71" width="2" height="1.43" fill="#1d1f20" opacity="0.2"/><rect x="10.72" y="85.64" width="13.45" height="1.43" fill="#1d1f20" opacity="0.28"/><rect x="4.37" y="85.64" width="2" height="1.43" fill="#1d1f20" opacity="0.2"/><rect x="10.72" y="88.57" width="10.31" height="1.43" fill="#1d1f20" opacity="0.28"/><rect x="4.37" y="88.57" width="2" height="1.43" fill="#1d1f20" opacity="0.2"/><line x1="2.37" y1="8.20" x2="2.37" y2="90.70" stroke="#1d1f20" stroke-width="1.1"/><line x1="9.92" y1="8.20" x2="9.92" y2="90.70" stroke="#1d1f20" stroke-width="1.1"/><line x1="35.37" y1="8.20" x2="35.37" y2="90.70" stroke="#1d1f20" stroke-width="1.1"/><line x1="65.07" y1="8.20" x2="65.07" y2="90.70" stroke="#1d1f20" stroke-width="1.1"/><line x1="94.27" y1="8.20" x2="94.27" y2="90.70" stroke="#1d1f20" stroke-width="1.1"/><line x1="110.30" y1="8.20" x2="110.30" y2="90.70" stroke="#1d1f20" stroke-width="1.1"/><line x1="137.63" y1="8.20" x2="137.63" y2="90.70" stroke="#1d1f20" stroke-width="1.1"/><line x1="2.37" y1="8.20" x2="137.63" y2="8.20" stroke="#1d1f20" stroke-width="1.2"/><line x1="2.37" y1="14.49" x2="137.63" y2="14.49" stroke="#1d1f20" stroke-width="1.2"/><line x1="2.37" y1="14.50" x2="137.63" y2="14.50" stroke="#1d1f20" stroke-width="1.2"/><line x1="2.37" y1="17.43" x2="137.63" y2="17.43" stroke="#1d1f20" stroke-width="1.2"/><line x1="2.37" y1="20.36" x2="137.63" y2="20.36" stroke="#1d1f20" stroke-width="1.2"/><line x1="2.37" y1="23.29" x2="137.63" y2="23.29" stroke="#1d1f20" stroke-width="1.2"/><line x1="2.37" y1="26.22" x2="137.63" y2="26.22" stroke="#1d1f20" stroke-width="1.2"/><line x1="2.37" y1="29.15" x2="137.63" y2="29.15" stroke="#1d1f20" stroke-width="1.2"/><line x1="2.37" y1="32.08" x2="137.63" y2="32.08" stroke="#1d1f20" stroke-width="1.2"/><line x1="2.37" y1="35.02" x2="137.63" y2="35.02" stroke="#1d1f20" stroke-width="1.2"/><line x1="2.37" y1="37.95" x2="137.63" y2="37.95" stroke="#1d1f20" stroke-width="1.2"/><line x1="2.37" y1="40.88" x2="137.63" y2="40.88" stroke="#1d1f20" stroke-width="1.2"/><line x1="2.37" y1="43.81" x2="137.63" y2="43.81" stroke="#1d1f20" stroke-width="1.2"/><line x1="2.37" y1="46.74" x2="137.63" y2="46.74" stroke="#1d1f20" stroke-width="1.2"/><line x1="2.37" y1="49.67" x2="137.63" y2="49.67" stroke="#1d1f20" stroke-width="1.2"/><line x1="2.37" y1="52.60" x2="137.63" y2="52.60" stroke="#1d1f20" stroke-width="1.2"/><line x1="2.37" y1="55.53" x2="137.63" y2="55.53" stroke="#1d1f20" stroke-width="1.2"/><line x1="2.37" y1="58.46" x2="137.63" y2="58.46" stroke="#1d1f20" stroke-width="1.2"/><line x1="2.37" y1="61.39" x2="137.63" y2="61.39" stroke="#1d1f20" stroke-width="1.2"/><line x1="2.37" y1="64.32" x2="137.63" y2="64.32" stroke="#1d1f20" stroke-width="1.2"/><line x1="2.37" y1="67.25" x2="137.63" y2="67.25" stroke="#1d1f20" stroke-width="1.2"/><line x1="2.37" y1="70.18" x2="137.63" y2="70.18" stroke="#1d1f20" stroke-width="1.2"/><line x1="2.37" y1="73.12" x2="137.63" y2="73.12" stroke="#1d1f20" stroke-width="1.2"/><line x1="2.37" y1="76.05" x2="137.63" y2="76.05" stroke="#1d1f20" stroke-width="1.2"/><line x1="2.37" y1="78.98" x2="137.63" y2="78.98" stroke="#1d1f20" stroke-width="1.2"/><line x1="2.37" y1="81.91" x2="137.63" y2="81.91" stroke="#1d1f20" stroke-width="1.2"/><line x1="2.37" y1="84.84" x2="137.63" y2="84.84" stroke="#1d1f20" stroke-width="1.2"/><line x1="2.37" y1="87.77" x2="137.63" y2="87.77" stroke="#1d1f20" stroke-width="1.2"/><line x1="2.37" y1="90.70" x2="137.63" y2="90.70" stroke="#1d1f20" stroke-width="1.2"/><rect x="2" y="93" width="6" height="0.8" fill="#1d1f20" opacity="0.35"/></svg>
<div style="position:absolute;left:-155.00px;top:414.37px;width:600px;text-align:center;font-family:'Liberation Sans', sans-serif;font-size:13px;line-height:16.25px;font-weight:700;color:#fff;white-space:nowrap;">2</div>
<svg style="position:absolute;left:75px;top:453px" width="140" height="99" viewBox="0 0 140 99"><rect width="140" height="99" fill="#9d9e9f"/><rect x="2.37" y="8.20" width="135.26" height="6.30" fill="#8a8b8c"/><rect x="3.87" y="10.85" width="4.55" height="1.1" fill="#1d1f20" opacity="0.35"/><rect x="17.15" y="10.85" width="11.00" height="1.1" fill="#1d1f20" opacity="0.35"/><rect x="43.22" y="10.85" width="14.00" height="1.1" fill="#1d1f20" opacity="0.35"/><rect x="71.17" y="10.85" width="17.00" height="1.1" fill="#1d1f20" opacity="0.35"/><rect x="95.77" y="10.85" width="13.03" height="1.1" fill="#1d1f20" opacity="0.35"/><rect x="112.47" y="10.85" width="23.00" height="1.1" fill="#1d1f20" opacity="0.35"/><rect x="10.72" y="15.30" width="17.45" height="1.43" fill="#1d1f20" opacity="0.28"/><rect x="4.37" y="15.30" width="2" height="1.43" fill="#1d1f20" opacity="0.2"/><rect x="10.72" y="18.23" width="15.04" height="1.43" fill="#1d1f20" opacity="0.28"/><rect x="4.37" y="18.23" width="2" height="1.43" fill="#1d1f20" opacity="0.2"/><rect x="10.72" y="21.16" width="10.91" height="1.43" fill="#1d1f20" opacity="0.28"/><rect x="4.37" y="21.16" width="2" height="1.43" fill="#1d1f20" opacity="0.2"/><rect x="10.72" y="24.09" width="9.46" height="1.43" fill="#1d1f20" opacity="0.28"/><rect x="4.37" y="24.09" width="2" height="1.43" fill="#1d1f20" opacity="0.2"/><rect x="10.72" y="27.02" width="8.18" height="1.43" fill="#1d1f20" opacity="0.28"/><rect x="4.37" y="27.02" width="2" height="1.43" fill="#1d1f20" opacity="0.2"/><rect x="10.72" y="29.95" width="11.65" height="1.43" fill="#1d1f20" opacity="0.28"/><rect x="4.37" y="29.95" width="2" height="1.43" fill="#1d1f20" opacity="0.2"/><rect x="10.72" y="32.88" width="14.21" height="1.43" fill="#1d1f20" opacity="0.28"/><rect x="4.37" y="32.88" width="2" height="1.43" fill="#1d1f20" opacity="0.2"/><rect x="10.72" y="35.82" width="8.08" height="1.43" fill="#1d1f20" opacity="0.28"/><rect x="4.37" y="35.82" width="2" height="1.43" fill="#1d1f20" opacity="0.2"/><rect x="10.72" y="38.75" width="13.52" height="1.43" fill="#1d1f20" opacity="0.28"/><rect x="4.37" y="38.75" width="2" height="1.43" fill="#1d1f20" opacity="0.2"/><rect x="111.10" y="38.75" width="14.50" height="1.43" fill="#1d1f20" opacity="0.22"/><rect x="10.72" y="41.68" width="10.13" height="1.43" fill="#1d1f20" opacity="0.28"/><rect x="4.37" y="41.68" width="2" height="1.43" fill="#1d1f20" opacity="0.2"/><rect x="111.10" y="41.68" width="8.03" height="1.43" fill="#1d1f20" opacity="0.22"/><rect x="10.72" y="44.61" width="13.31" height="1.43" fill="#1d1f20" opacity="0.28"/><rect x="4.37" y="44.61" width="2" height="1.43" fill="#1d1f20" opacity="0.2"/><rect x="111.10" y="44.61" width="14.44" height="1.43" fill="#1d1f20" opacity="0.22"/><rect x="10.72" y="47.54" width="14.54" height="1.43" fill="#1d1f20" opacity="0.28"/><rect x="4.37" y="47.54" width="2" height="1.43" fill="#1d1f20" opacity="0.2"/><rect x="10.72" y="50.47" width="12.26" height="1.43" fill="#1d1f20" opacity="0.28"/><rect x="4.37" y="50.47" width="2" height="1.43" fill="#1d1f20" opacity="0.2"/><rect x="111.10" y="50.47" width="15.43" height="1.43" fill="#1d1f20" opacity="0.22"/><rect x="10.72" y="53.40" width="8.18" height="1.43" fill="#1d1f20" opacity="0.28"/><rect x="4.37" y="53.40" width="2" height="1.43" fill="#1d1f20" opacity="0.2"/><rect x="10.72" y="56.33" width="8.80" height="1.43" fill="#1d1f20" opacity="0.28"/><rect x="4.37" y="56.33" width="2" height="1.43" fill="#1d1f20" opacity="0.2"/><rect x="10.72" y="59.26" width="19.72" height="1.43" fill="#1d1f20" opacity="0.28"/><rect x="4.37" y="59.26" width="2" height="1.43" fill="#1d1f20" opacity="0.2"/><rect x="111.10" y="59.26" width="17.83" height="1.43" fill="#1d1f20" opacity="0.22"/><rect x="10.72" y="62.19" width="10.21" height="1.43" fill="#1d1f20" opacity="0.28"/><rect x="4.37" y="62.19" width="2" height="1.43" fill="#1d1f20" opacity="0.2"/><rect x="10.72" y="65.12" width="14.50" height="1.43" fill="#1d1f20" opacity="0.28"/><rect x="4.37" y="65.12" width="2" height="1.43" fill="#1d1f20" opacity="0.2"/><rect x="111.10" y="65.12" width="12.67" height="1.43" fill="#1d1f20" opacity="0.22"/><rect x="10.72" y="68.05" width="12.77" height="1.43" fill="#1d1f20" opacity="0.28"/><rect x="4.37" y="68.05" width="2" height="1.43" fill="#1d1f20" opacity="0.2"/><rect x="111.10" y="68.05" width="20.71" height="1.43" fill="#1d1f20" opacity="0.22"/><rect x="10.72" y="70.98" width="11.49" height="1.43" fill="#1d1f20" opacity="0.28"/><rect x="4.37" y="70.98" width="2" height="1.43" fill="#1d1f20" opacity="0.2"/><rect x="10.72" y="73.92" width="15.02" height="1.43" fill="#1d1f20" opacity="0.28"/><rect x="4.37" y="73.92" width="2" height="1.43" fill="#1d1f20" opacity="0.2"/><rect x="10.72" y="76.85" width="14.76" height="1.43" fill="#1d1f20" opacity="0.28"/><rect x="4.37" y="76.85" width="2" height="1.43" fill="#1d1f20" opacity="0.2"/><rect x="111.10" y="76.85" width="21.08" height="1.43" fill="#1d1f20" opacity="0.22"/><rect x="10.72" y="79.78" width="19.12" height="1.43" fill="#1d1f20" opacity="0.28"/><rect x="4.37" y="79.78" width="2" height="1.43" fill="#1d1f20" opacity="0.2"/><rect x="10.72" y="82.71" width="8.77" height="1.43" fill="#1d1f20" opacity="0.28"/><rect x="4.37" y="82.71" width="2" height="1.43" fill="#1d1f20" opacity="0.2"/><rect x="10.72" y="85.64" width="9.42" height="1.43" fill="#1d1f20" opacity="0.28"/><rect x="4.37" y="85.64" width="2" height="1.43" fill="#1d1f20" opacity="0.2"/><rect x="10.72" y="88.57" width="8.86" height="1.43" fill="#1d1f20" opacity="0.28"/><rect x="4.37" y="88.57" width="2" height="1.43" fill="#1d1f20" opacity="0.2"/><line x1="2.37" y1="8.20" x2="2.37" y2="90.70" stroke="#1d1f20" stroke-width="1.1"/><line x1="9.92" y1="8.20" x2="9.92" y2="90.70" stroke="#1d1f20" stroke-width="1.1"/><line x1="35.37" y1="8.20" x2="35.37" y2="90.70" stroke="#1d1f20" stroke-width="1.1"/><line x1="65.07" y1="8.20" x2="65.07" y2="90.70" stroke="#1d1f20" stroke-width="1.1"/><line x1="94.27" y1="8.20" x2="94.27" y2="90.70" stroke="#1d1f20" stroke-width="1.1"/><line x1="110.30" y1="8.20" x2="110.30" y2="90.70" stroke="#1d1f20" stroke-width="1.1"/><line x1="137.63" y1="8.20" x2="137.63" y2="90.70" stroke="#1d1f20" stroke-width="1.1"/><line x1="2.37" y1="8.20" x2="137.63" y2="8.20" stroke="#1d1f20" stroke-width="1.2"/><line x1="2.37" y1="14.49" x2="137.63" y2="14.49" stroke="#1d1f20" stroke-width="1.2"/><line x1="2.37" y1="14.50" x2="137.63" y2="14.50" stroke="#1d1f20" stroke-width="1.2"/><line x1="2.37" y1="17.43" x2="137.63" y2="17.43" stroke="#1d1f20" stroke-width="1.2"/><line x1="2.37" y1="20.36" x2="137.63" y2="20.36" stroke="#1d1f20" stroke-width="1.2"/><line x1="2.37" y1="23.29" x2="137.63" y2="23.29" stroke="#1d1f20" stroke-width="1.2"/><line x1="2.37" y1="26.22" x2="137.63" y2="26.22" stroke="#1d1f20" stroke-width="1.2"/><line x1="2.37" y1="29.15" x2="137.63" y2="29.15" stroke="#1d1f20" stroke-width="1.2"/><line x1="2.37" y1="32.08" x2="137.63" y2="32.08" stroke="#1d1f20" stroke-width="1.2"/><line x1="2.37" y1="35.02" x2="137.63" y2="35.02" stroke="#1d1f20" stroke-width="1.2"/><line x1="2.37" y1="37.95" x2="137.63" y2="37.95" stroke="#1d1f20" stroke-width="1.2"/><line x1="2.37" y1="40.88" x2="137.63" y2="40.88" stroke="#1d1f20" stroke-width="1.2"/><line x1="2.37" y1="43.81" x2="137.63" y2="43.81" stroke="#1d1f20" stroke-width="1.2"/><line x1="2.37" y1="46.74" x2="137.63" y2="46.74" stroke="#1d1f20" stroke-width="1.2"/><line x1="2.37" y1="49.67" x2="137.63" y2="49.67" stroke="#1d1f20" stroke-width="1.2"/><line x1="2.37" y1="52.60" x2="137.63" y2="52.60" stroke="#1d1f20" stroke-width="1.2"/><line x1="2.37" y1="55.53" x2="137.63" y2="55.53" stroke="#1d1f20" stroke-width="1.2"/><line x1="2.37" y1="58.46" x2="137.63" y2="58.46" stroke="#1d1f20" stroke-width="1.2"/><line x1="2.37" y1="61.39" x2="137.63" y2="61.39" stroke="#1d1f20" stroke-width="1.2"/><line x1="2.37" y1="64.32" x2="137.63" y2="64.32" stroke="#1d1f20" stroke-width="1.2"/><line x1="2.37" y1="67.25" x2="137.63" y2="67.25" stroke="#1d1f20" stroke-width="1.2"/><line x1="2.37" y1="70.18" x2="137.63" y2="70.18" stroke="#1d1f20" stroke-width="1.2"/><line x1="2.37" y1="73.12" x2="137.63" y2="73.12" stroke="#1d1f20" stroke-width="1.2"/><line x1="2.37" y1="76.05" x2="137.63" y2="76.05" stroke="#1d1f20" stroke-width="1.2"/><line x1="2.37" y1="78.98" x2="137.63" y2="78.98" stroke="#1d1f20" stroke-width="1.2"/><line x1="2.37" y1="81.91" x2="137.63" y2="81.91" stroke="#1d1f20" stroke-width="1.2"/><line x1="2.37" y1="84.84" x2="137.63" y2="84.84" stroke="#1d1f20" stroke-width="1.2"/><line x1="2.37" y1="87.77" x2="137.63" y2="87.77" stroke="#1d1f20" stroke-width="1.2"/><line x1="2.37" y1="90.70" x2="137.63" y2="90.70" stroke="#1d1f20" stroke-width="1.2"/><rect x="2" y="93" width="6" height="0.8" fill="#1d1f20" opacity="0.35"/></svg>
<div style="position:absolute;left:-155.00px;top:562.37px;width:600px;text-align:center;font-family:'Liberation Sans', sans-serif;font-size:13px;line-height:16.25px;font-weight:700;color:#fff;white-space:nowrap;">3</div>
<div style="position:absolute;left:69px;top:595px;width:152px;height:111px;background:#8ab4f8"></div>
<svg style="position:absolute;left:75px;top:601px" width="140" height="99" viewBox="0 0 140 99"><rect width="140" height="99" fill="#ffffff"/><rect x="2.37" y="8.48" width="135.26" height="8.46" fill="#d3d3d3"/><rect x="3.87" y="10.81" width="4.55" height="1.1" fill="#000" opacity="0.35"/><rect x="17.15" y="10.81" width="11.00" height="1.1" fill="#000" opacity="0.35"/><rect x="43.22" y="10.81" width="14.00" height="1.1" fill="#000" opacity="0.35"/><rect x="71.17" y="10.81" width="17.00" height="1.1" fill="#000" opacity="0.35"/><rect x="95.77" y="10.81" width="13.03" height="1.1" fill="#000" opacity="0.35"/><rect x="112.47" y="10.81" width="23.00" height="1.1" fill="#000" opacity="0.35"/><rect x="10.72" y="17.74" width="17.38" height="1.32" fill="#000" opacity="0.28"/><rect x="4.37" y="17.74" width="2" height="1.32" fill="#000" opacity="0.2"/><rect x="10.72" y="20.57" width="19.79" height="1.32" fill="#000" opacity="0.28"/><rect x="4.37" y="20.57" width="2" height="1.32" fill="#000" opacity="0.2"/><rect x="111.10" y="20.57" width="16.26" height="1.32" fill="#000" opacity="0.22"/><rect x="10.72" y="23.39" width="18.99" height="1.32" fill="#000" opacity="0.28"/><rect x="4.37" y="23.39" width="2" height="1.32" fill="#000" opacity="0.2"/><rect x="10.72" y="26.22" width="10.08" height="4.29" fill="#000" opacity="0.28"/><rect x="4.37" y="26.22" width="2" height="4.29" fill="#000" opacity="0.2"/><rect x="10.72" y="32.01" width="11.86" height="1.32" fill="#000" opacity="0.28"/><rect x="4.37" y="32.01" width="2" height="1.32" fill="#000" opacity="0.2"/><rect x="111.10" y="32.01" width="9.93" height="1.32" fill="#000" opacity="0.22"/><rect x="10.72" y="34.83" width="19.02" height="1.32" fill="#000" opacity="0.28"/><rect x="4.37" y="34.83" width="2" height="1.32" fill="#000" opacity="0.2"/><rect x="10.72" y="37.65" width="19.74" height="1.32" fill="#000" opacity="0.28"/><rect x="4.37" y="37.65" width="2" height="1.32" fill="#000" opacity="0.2"/><rect x="10.72" y="40.48" width="17.17" height="1.32" fill="#000" opacity="0.28"/><rect x="4.37" y="40.48" width="2" height="1.32" fill="#000" opacity="0.2"/><rect x="10.72" y="43.30" width="10.32" height="1.32" fill="#000" opacity="0.28"/><rect x="4.37" y="43.30" width="2" height="1.32" fill="#000" opacity="0.2"/><rect x="111.10" y="43.30" width="8.86" height="1.32" fill="#000" opacity="0.22"/><rect x="10.72" y="46.12" width="14.72" height="1.32" fill="#000" opacity="0.28"/><rect x="4.37" y="46.12" width="2" height="1.32" fill="#000" opacity="0.2"/><rect x="10.72" y="48.95" width="11.80" height="1.32" fill="#000" opacity="0.28"/><rect x="4.37" y="48.95" width="2" height="1.32" fill="#000" opacity="0.2"/><rect x="10.72" y="51.77" width="18.18" height="1.32" fill="#000" opacity="0.28"/><rect x="4.37" y="51.77" width="2" height="1.32" fill="#000" opacity="0.2"/><rect x="10.72" y="54.60" width="16.54" height="1.32" fill="#000" opacity="0.28"/><rect x="4.37" y="54.60" width="2" height="1.32" fill="#000" opacity="0.2"/><rect x="10.72" y="57.42" width="15.76" height="1.32" fill="#000" opacity="0.28"/><rect x="4.37" y="57.42" width="2" height="1.32" fill="#000" opacity="0.2"/><rect x="10.72" y="60.24" width="18.96" height="1.32" fill="#000" opacity="0.28"/><rect x="4.37" y="60.24" width="2" height="1.32" fill="#000" opacity="0.2"/><rect x="10.72" y="63.07" width="14.79" height="1.32" fill="#000" opacity="0.28"/><rect x="4.37" y="63.07" width="2" height="1.32" fill="#000" opacity="0.2"/><rect x="10.72" y="65.89" width="9.88" height="1.32" fill="#000" opacity="0.28"/><rect x="4.37" y="65.89" width="2" height="1.32" fill="#000" opacity="0.2"/><rect x="111.10" y="65.89" width="14.88" height="1.32" fill="#000" opacity="0.22"/><rect x="10.72" y="68.71" width="12.42" height="1.32" fill="#000" opacity="0.28"/><rect x="4.37" y="68.71" width="2" height="1.32" fill="#000" opacity="0.2"/><rect x="111.10" y="68.71" width="15.23" height="1.32" fill="#000" opacity="0.22"/><rect x="10.72" y="71.54" width="19.86" height="1.32" fill="#000" opacity="0.28"/><rect x="4.37" y="71.54" width="2" height="1.32" fill="#000" opacity="0.2"/><rect x="10.72" y="74.36" width="11.61" height="1.32" fill="#000" opacity="0.28"/><rect x="4.37" y="74.36" width="2" height="1.32" fill="#000" opacity="0.2"/><rect x="10.72" y="77.18" width="13.01" height="1.32" fill="#000" opacity="0.28"/><rect x="4.37" y="77.18" width="2" height="1.32" fill="#000" opacity="0.2"/><rect x="10.72" y="80.01" width="12.92" height="1.32" fill="#000" opacity="0.28"/><rect x="4.37" y="80.01" width="2" height="1.32" fill="#000" opacity="0.2"/><rect x="10.72" y="82.83" width="19.50" height="4.29" fill="#000" opacity="0.28"/><rect x="4.37" y="82.83" width="2" height="4.29" fill="#000" opacity="0.2"/><rect x="10.72" y="88.62" width="9.61" height="1.32" fill="#000" opacity="0.28"/><rect x="4.37" y="88.62" width="2" height="1.32" fill="#000" opacity="0.2"/><line x1="2.37" y1="8.48" x2="2.37" y2="90.65" stroke="#000" stroke-width="1.1"/><line x1="9.92" y1="8.48" x2="9.92" y2="90.65" stroke="#000" stroke-width="1.1"/><line x1="35.37" y1="8.48" x2="35.37" y2="90.65" stroke="#000" stroke-width="1.1"/><line x1="65.07" y1="8.48" x2="65.07" y2="90.65" stroke="#000" stroke-width="1.1"/><line x1="94.27" y1="8.48" x2="94.27" y2="90.65" stroke="#000" stroke-width="1.1"/><line x1="110.30" y1="8.48" x2="110.30" y2="90.65" stroke="#000" stroke-width="1.1"/><line x1="137.63" y1="8.48" x2="137.63" y2="90.65" stroke="#000" stroke-width="1.1"/><line x1="2.37" y1="8.48" x2="137.63" y2="8.48" stroke="#000" stroke-width="1.15"/><line x1="2.37" y1="14.13" x2="137.63" y2="14.13" stroke="#000" stroke-width="1.15"/><line x1="2.37" y1="16.94" x2="137.63" y2="16.94" stroke="#000" stroke-width="1.15"/><line x1="2.37" y1="19.77" x2="137.63" y2="19.77" stroke="#000" stroke-width="1.15"/><line x1="2.37" y1="22.59" x2="137.63" y2="22.59" stroke="#000" stroke-width="1.15"/><line x1="2.37" y1="25.42" x2="137.63" y2="25.42" stroke="#000" stroke-width="1.15"/><line x1="2.37" y1="31.21" x2="137.63" y2="31.21" stroke="#000" stroke-width="1.15"/><line x1="2.37" y1="34.03" x2="137.63" y2="34.03" stroke="#000" stroke-width="1.15"/><line x1="2.37" y1="36.85" x2="137.63" y2="36.85" stroke="#000" stroke-width="1.15"/><line x1="2.37" y1="39.68" x2="137.63" y2="39.68" stroke="#000" stroke-width="1.15"/><line x1="2.37" y1="42.50" x2="137.63" y2="42.50" stroke="#000" stroke-width="1.15"/><line x1="2.37" y1="45.32" x2="137.63" y2="45.32" stroke="#000" stroke-width="1.15"/><line x1="2.37" y1="48.15" x2="137.63" y2="48.15" stroke="#000" stroke-width="1.15"/><line x1="2.37" y1="50.97" x2="137.63" y2="50.97" stroke="#000" stroke-width="1.15"/><line x1="2.37" y1="53.80" x2="137.63" y2="53.80" stroke="#000" stroke-width="1.15"/><line x1="2.37" y1="56.62" x2="137.63" y2="56.62" stroke="#000" stroke-width="1.15"/><line x1="2.37" y1="59.44" x2="137.63" y2="59.44" stroke="#000" stroke-width="1.15"/><line x1="2.37" y1="62.27" x2="137.63" y2="62.27" stroke="#000" stroke-width="1.15"/><line x1="2.37" y1="65.09" x2="137.63" y2="65.09" stroke="#000" stroke-width="1.15"/><line x1="2.37" y1="67.91" x2="137.63" y2="67.91" stroke="#000" stroke-width="1.15"/><line x1="2.37" y1="70.74" x2="137.63" y2="70.74" stroke="#000" stroke-width="1.15"/><line x1="2.37" y1="73.56" x2="137.63" y2="73.56" stroke="#000" stroke-width="1.15"/><line x1="2.37" y1="76.38" x2="137.63" y2="76.38" stroke="#000" stroke-width="1.15"/><line x1="2.37" y1="79.21" x2="137.63" y2="79.21" stroke="#000" stroke-width="1.15"/><line x1="2.37" y1="82.03" x2="137.63" y2="82.03" stroke="#000" stroke-width="1.15"/><line x1="2.37" y1="87.82" x2="137.63" y2="87.82" stroke="#000" stroke-width="1.15"/><line x1="2.37" y1="90.65" x2="137.63" y2="90.65" stroke="#000" stroke-width="1.15"/><rect x="2" y="93" width="6" height="0.8" fill="#000" opacity="0.35"/></svg>
<div style="position:absolute;left:-155.00px;top:710.37px;width:600px;text-align:center;font-family:'Liberation Sans', sans-serif;font-size:13px;line-height:16.25px;font-weight:700;color:#fff;white-space:nowrap;">4</div>
<svg style="position:absolute;left:75px;top:749px" width="140" height="99" viewBox="0 0 140 99"><rect width="140" height="99" fill="#9d9e9f"/><rect x="29" y="13.5" width="15" height="0.9" fill="#1d1f20" opacity="0.4"/><rect x="31" y="15.5" width="10" height="0.9" fill="#1d1f20" opacity="0.4"/><rect x="30" y="22.5" width="13" height="0.9" fill="#1d1f20" opacity="0.4"/><rect x="96" y="11.5" width="16" height="0.9" fill="#1d1f20" opacity="0.4"/><rect x="96" y="14" width="16" height="0.9" fill="#1d1f20" opacity="0.4"/><rect x="96" y="16" width="16" height="0.9" fill="#1d1f20" opacity="0.4"/><rect x="97" y="23" width="14" height="0.9" fill="#1d1f20" opacity="0.4"/><rect x="2" y="93" width="6" height="0.8" fill="#1d1f20" opacity="0.35"/></svg>
<div style="position:absolute;left:-155.00px;top:858.37px;width:600px;text-align:center;font-family:'Liberation Sans', sans-serif;font-size:13px;line-height:16.25px;font-weight:700;color:#fff;white-space:nowrap;">5</div></body></html>
